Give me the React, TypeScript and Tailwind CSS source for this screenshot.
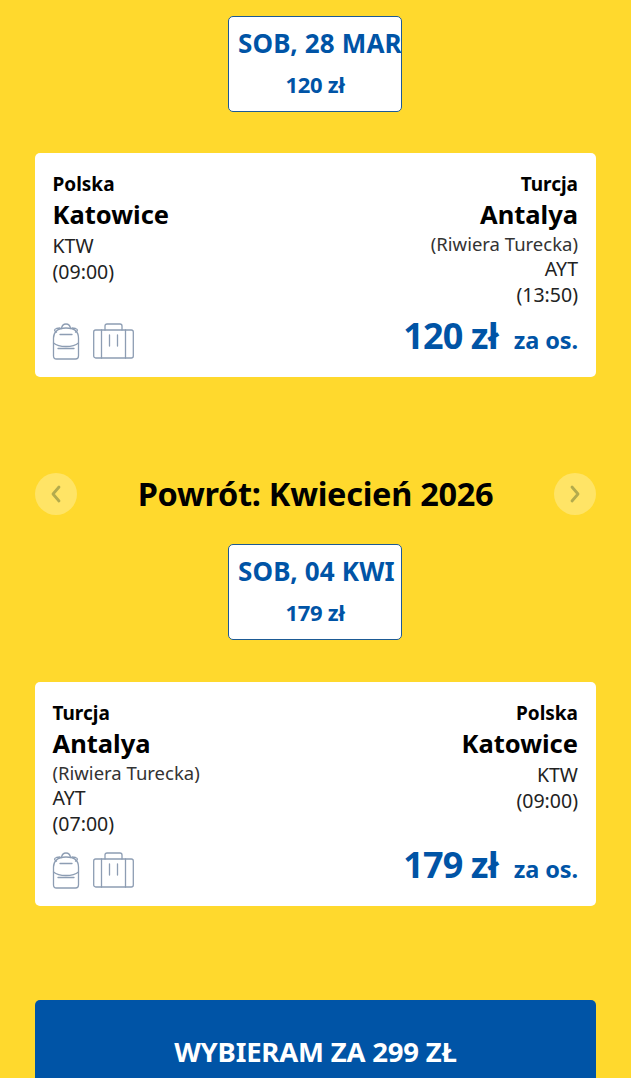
const font = { fontFamily: '"Noto Sans", sans-serif' }

function Backpack() {
  return (
    <svg width="28" height="37" viewBox="0 0 28 37" fill="none" stroke="#8d9db3" strokeWidth="1.3" strokeLinecap="round" strokeLinejoin="round">
      <path d="M9.5 5.5 C10 2 11.5 1 14 1 C16.5 1 18 2 18.5 5.5" />
      <path d="M4.5 9 C2.5 8.5 1.5 6.5 4.5 5.5 L8 5" />
      <path d="M23.5 9 C25.5 8.5 26.5 6.5 23.5 5.5 L20 5" />
      <path d="M1.5 15 C1.5 9.5 5 5 14 5 C23 5 26.5 9.5 26.5 15 L26.5 33 C26.5 35 25.5 36 23.5 36 L4.5 36 C2.5 36 1.5 35 1.5 33 Z" />
      <path d="M1.5 20 C5 23 9 23.5 14 23.5 C19 23.5 23 23 26.5 20" />
      <path d="M8 11.5 L20 11.5" />
      <path d="M6 25.5 L22 25.5" />
    </svg>
  )
}

function Suitcase() {
  return (
    <svg width="41" height="36" viewBox="0 0 41 36" fill="none" stroke="#8d9db3" strokeWidth="1.3" strokeLinecap="round" strokeLinejoin="round">
      <path d="M12 7 L12 3 C12 1.8 12.8 1 14 1 L27 1 C28.2 1 29 1.8 29 3 L29 7" />
      <rect x="0.7" y="7" width="39.6" height="28" rx="2" />
      <path d="M8.5 7 L8.5 35" />
      <path d="M32.5 7 L32.5 35" />
      <path d="M16.5 12 L16.5 23" />
      <path d="M24.5 12 L24.5 23" />
    </svg>
  )
}

function Chevron({ dir }: { dir: "left" | "right" }) {
  return (
    <button className="w-[42px] h-[42px] rounded-full bg-[#ffe466] flex items-center justify-center">
      <svg width="12" height="20" viewBox="0 0 12 20" fill="none" stroke="#b3ab4d" strokeWidth="2.8" strokeLinecap="round" strokeLinejoin="round">
        <path d={dir === "left" ? "M9 3 L3 10 L9 17" : "M3 3 L9 10 L3 17"} />
      </svg>
    </button>
  )
}

function DateBox({ label, price }: { label: string; price: string }) {
  return (
    <div className="ml-[193px] w-[174px] h-[96px] bg-white border-[1.5px] border-[#1d5a94] rounded-[5px] overflow-hidden flex flex-col items-center">
      <div className="pt-[8px] pl-[9px] self-start whitespace-nowrap text-[26px] leading-[36px] font-bold text-[#0054a6] tracking-[0.15px]">{label}</div>
      <div className="mt-[6.5px] text-[22px] leading-[32px] font-bold text-[#0054a6] tracking-[-0.3px]">{price}</div>
    </div>
  )
}

interface Place {
  country: string
  city: string
  region?: string
  code: string
  time: string
}

function PlaceInfo({ place, right }: { place: Place; right?: boolean }) {
  return (
    <div className={right ? "text-right" : ""}>
      <div className="text-[19px] leading-[24px] font-bold text-black">{place.country}</div>
      <div className="text-[25.5px] leading-[37px] font-bold text-black">{place.city}</div>
      {place.region && <div className="text-[18.5px] leading-[22px] text-[#333]">{place.region}</div>}
      <div className={(place.region ? "mt-[1px] " : "") + "text-[19.5px] leading-[26px] text-[#222]"}>{place.code}</div>
      <div className="text-[19.5px] leading-[26px] text-[#222]">{place.time}</div>
    </div>
  )
}

function FlightCard({ from, to, price }: { from: Place; to: Place; price: string }) {
  return (
    <div className="h-[224px] bg-white rounded-[5px] pl-[17.5px] pr-[18px] pt-[19px] flex flex-col">
      <div className="flex justify-between h-[141px]">
        <PlaceInfo place={from} />
        <PlaceInfo place={to} right />
      </div>
      <div className="flex items-start justify-between">
        <div className="flex items-start gap-[13px] mt-[10px] ml-[-1px]">
          <Backpack />
          <Suitcase />
        </div>
        <div className="flex items-baseline text-[#0054a6] font-bold">
          <span className="text-[36px] leading-[46px] tracking-[-0.9px]">{price}</span>
          <span className="ml-[16px] text-[23.5px] leading-[30px] tracking-[-0.1px]">za os.</span>
        </div>
      </div>
    </div>
  )
}

const ktw = { country: "Polska", city: "Katowice", code: "KTW", time: "(09:00)" }

export default function App() {
  return (
    <div style={font} className="w-full h-[1078px] overflow-hidden bg-[#ffd92d] px-[35px] pt-[16px]">
      <DateBox label="SOB, 28 MAR" price="120 zł" />
      <div className="mt-[41px]">
        <FlightCard
          from={ktw}
          to={{ country: "Turcja", city: "Antalya", region: "(Riwiera Turecka)", code: "AYT", time: "(13:50)" }}
          price="120 zł"
        />
      </div>
      <div className="mt-[96px] flex items-center justify-between">
        <Chevron dir="left" />
        <h2 className="text-[32.5px] leading-[42px] font-bold text-black tracking-[-0.3px]">Powrót: Kwiecień 2026</h2>
        <Chevron dir="right" />
      </div>
      <div className="mt-[29px]">
        <DateBox label="SOB, 04 KWI" price="179 zł" />
      </div>
      <div className="mt-[42px]">
        <FlightCard
          from={{ country: "Turcja", city: "Antalya", region: "(Riwiera Turecka)", code: "AYT", time: "(07:00)" }}
          to={ktw}
          price="179 zł"
        />
      </div>
      <button className="mt-[94px] w-full h-[106px] bg-[#0054a6] rounded-[5px] text-white text-[27.5px] font-bold tracking-[-0.2px] pb-[2px]">
        WYBIERAM ZA 299 ZŁ
      </button>
    </div>
  )
}
